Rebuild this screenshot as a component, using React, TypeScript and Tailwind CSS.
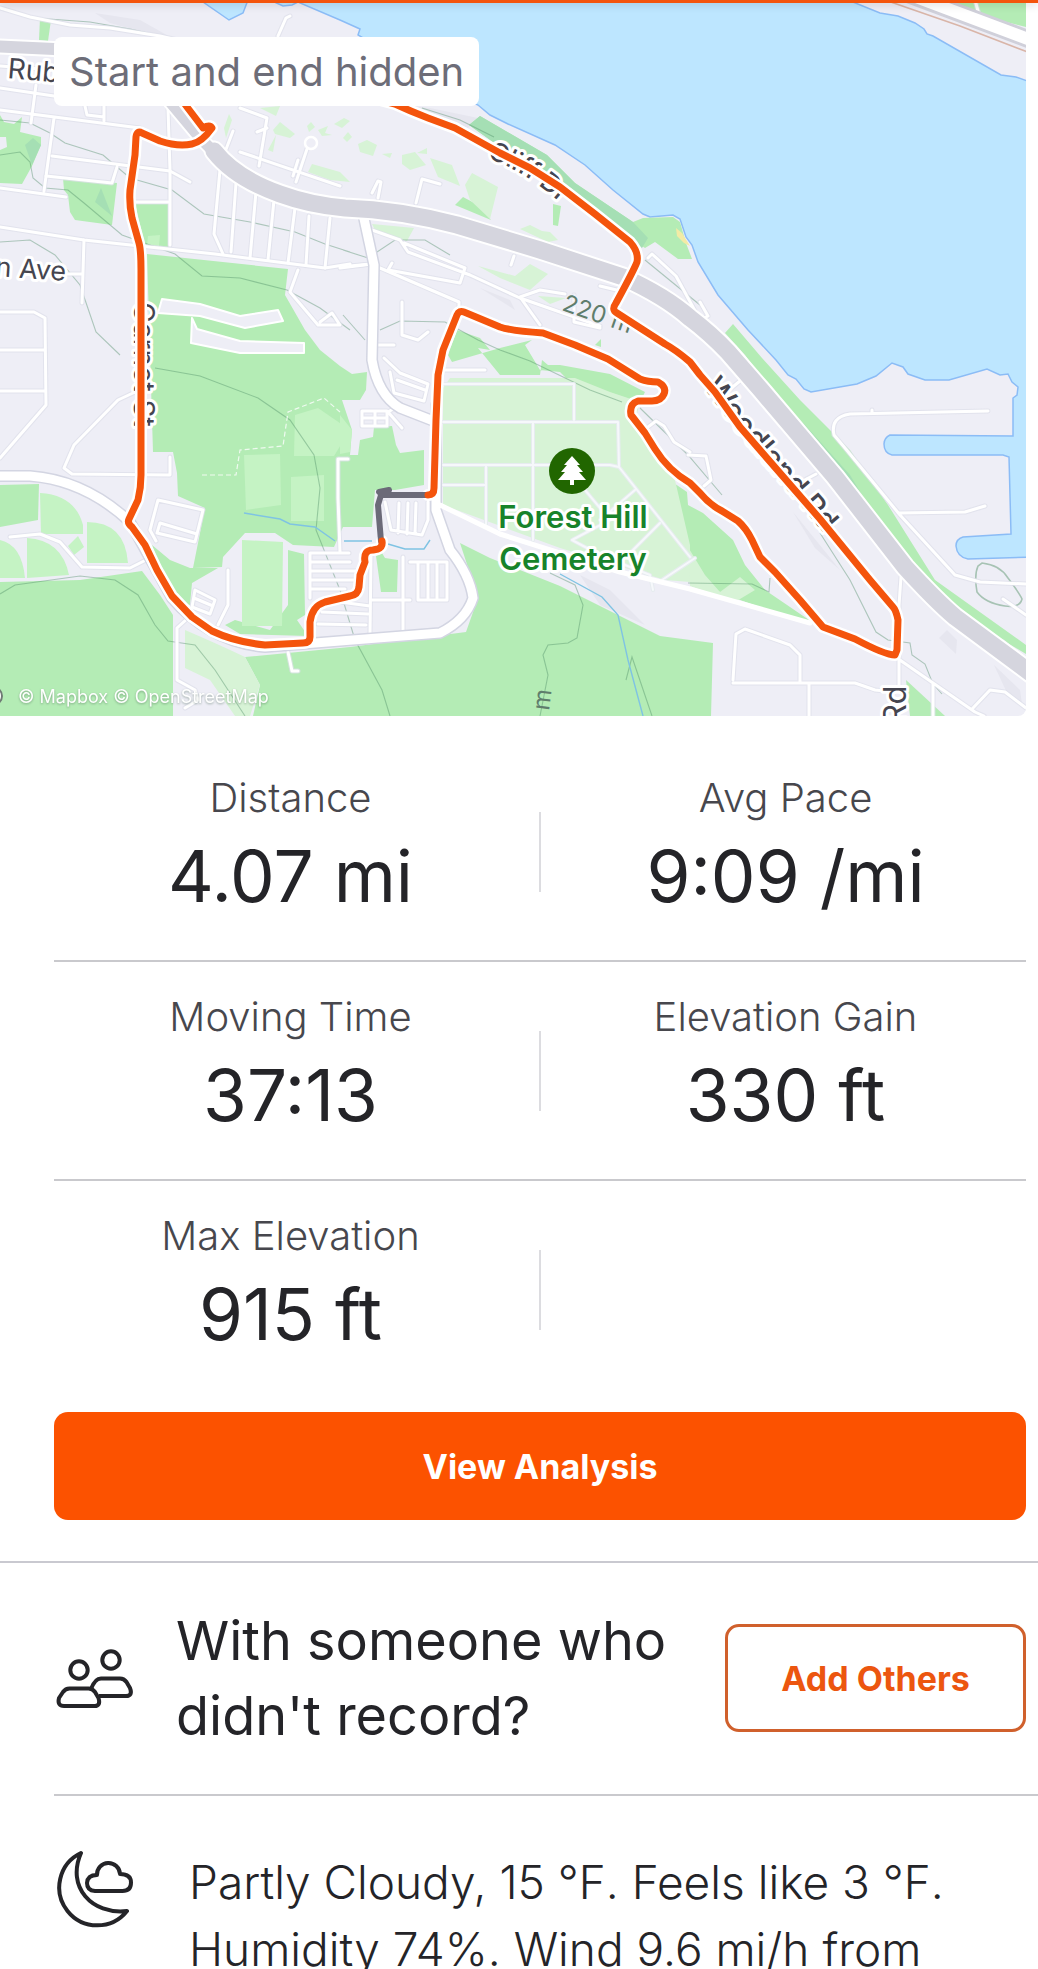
import React from "react";

const LAND = "#eeeef6";
const GREEN = "#b4ecb5";
const FIELD = "#c5f3c4";
const PALE = "#d7f3d6";

const water =
  "M200 0L229 20L243 13L248 0M270 0L283 6L292 5L298 2L340 20L360 29L358 35L420 72L478 105L490 115L508 124L555 145L585 165L613 190L643 214L650 217L673 215L680 219L686 237L692 245L698 262L718 295L748 330L776 360L788 375L796 379L804 389L811 392L857 384L876 376L892 363L903 367L908 374L925 380L949 380L987 369L1000 375L1008 374L1012 382L1018 387L1017 395L1013 398L1013 436L890 435Q884 438 884 444Q884 453 892 455L1003 455L1009 457L1011 534L963 537Q956 539 956 546Q957 557 968 559L1030 557L1030 82L1016 77L1001 75L933 36L927 34L924 29L915 23L898 16L880 13L848 0";

const greens = [
  "M40 18L51 20L48 41L39 40Z",
  "M0 115L4 122L14 124L22 117L20 132L41 137L41 145L32 166L22 184L0 183V150L7 147L6 137L0 137Z",
  "M63 178L117 183L112 225L75 220L70 212L68 195L64 190Z",
  "M135 204H168V247L145 245Z",
  "M147 254L288 269L285 295L305 330L320 350L340 366L352 374L367 372L366 390L360 400L342 400L352 430L350 455L358 455L360 440L373 437L374 427L392 426L396 445L400 453L424 450L424 485L395 490H375L372 527L343 527L334 547L293 545L275 533H245L223 557L222 567L193 568L205 508L178 496L177 473L173 452L153 452Z",
  "M0 485L39 484L38 520L0 527Z",
  "M0 582L80 580L142 571L160 595L173 615V716H0Z",
  "M152 545L170 560L190 568H218L192 583L190 605L180 603L165 580Z",
  "M245 657L350 647L466 632L478 598L460 543L490 558L560 586L660 636L713 643L711 716H253L260 685Z",
  "M376 556L382 553L385 558L398 560L397 592L381 592Z",
  "M288 550L304 554L305 615L297 620L308 636L240 634L225 625L235 620L270 630L288 605Z",
  "M457 330L480 338L490 350L478 348L500 375H540L542 360L548 365L560 365L610 374L645 392L640 402L615 396L570 382L560 372L540 370L525 345L532 340L500 348L452 362L448 355Z",
  "M640 487L662 475L687 492L688 505L703 513L733 540L745 565L765 590L790 607L812 622L768 610L740 600L715 590L700 575L688 560Z",
  "M455 205L463 197L480 206L491 220Z",
  "M553 204L561 206L558 226L553 225Z",
  "M595 345L601 339V347Z",
  "M906 680L945 716H910Z",
  "M955 3H1026V27L975 14Z",
];

const fields = [
  "M40 493Q75 495 83 525V534H41Z",
  "M87 522Q125 522 128 563H87Z",
  "M68 546L78 536L84 547L74 555Z",
  "M0 540Q22 545 25 578H0Z",
  "M27 538Q62 540 69 575L27 578Z",
  "M244 455L280 454L281 505L246 510Z",
  "M291 477L324 475V521H291Z",
  "M295 415L318 408L350 430L334 456H294Z",
  "M242 540L283 542L282 626H242Z",
  "M340 415L352 430L350 452L340 454Z",
  "M148 236L160 235L159 246L147 245Z",
];

const pale = [
  "M443 388L450 378L575 378L610 392L640 402L634 425L655 455L675 480L690 545V582L665 580L560 548L443 505Z",
  "M688 547L705 575L720 592L740 577L755 590L735 602L690 586Z",
  "M185 630Q220 645 245 657L260 685L250 716H235L210 680L185 668Z",
  "M260 108L280 106L276 116Z",
  "M273 130L280 122L295 134L290 138L275 134Z",
  "M268 150L276 135L273 152Z",
  "M224 128L229 114L232 120L226 138Z",
  "M307 126L311 122L315 127L309 132Z",
  "M318 130L328 126L325 133L332 135L322 136Z",
  "M334 124L344 118L350 121L342 128Z",
  "M343 138L348 132L352 137L347 142Z",
  "M358 144L367 140L377 145L373 156L360 152Z",
  "M312 164L340 172L350 182L330 180L308 172Z",
  "M382 154L392 153L390 158Z",
  "M402 155L415 152L426 165L410 170L402 164Z",
  "M417 153L427 148V154Z",
  "M430 158L452 165L460 186L438 177Z",
  "M472 173L498 187L490 219L470 200L465 185Z",
  "M372 224L414 228L407 241L376 232Z",
  "M478 266L515 276L530 264L548 274L530 290L500 278Z",
  "M538 296L566 298L550 304Z",
  "M520 229L530 225L542 231L550 232L558 240L548 242L535 236Z",
];

const minorRoads = [
  "M0 8L30 17L70 25L110 28L160 36L230 52",
  "M278 36L286 18L290 16",
  "M0 66L54 70M0 88L54 96M36 85L31 123M0 110L140 128M54 118L44 191M0 188L66 197",
  "M52 156L170 171L190 182M46 176L112 183L117 167",
  "M104 106V121M85 106L87 115L104 117",
  "M168 108L170 170V245M135 202H168",
  "M240 108L267 118L259 166M257 132L267 128",
  "M307 149L296 182M233 131L225 152",
  "M240 152L340 186M298 160L293 176",
  "M0 227L84 240L140 246L215 254L325 268L350 264",
  "M84 240L82 303M68 274H82",
  "M220 170L214 234L223 254M236 183L231 252M256 192L250 258M274 200L268 260M295 208L288 263M309 216L306 265M330 218L325 268",
  "M298 270L290 292L318 325H340L332 313L320 322M350 266L370 264",
  "M0 312H34L45 318L46 405L0 458M0 350H45M0 391H45",
  "M133 393L118 400L74 445L64 468L72 474L170 475V457",
  "M10 537L40 534L60 542L82 567L130 568L146 560",
  "M150 530L158 500L203 510L195 542L157 533L160 523L197 534M150 530L156 541",
  "M228 570L228 605L218 625M195 590L215 600L210 614L192 607ZM194 598L213 606",
  "M188 618L177 628V680L195 690L198 700L185 708M288 652L292 671H298",
  "M310 553H349M310 562H350M310 571H356M310 580H357M310 589H345M340 602L370 606M322 612L368 614M318 624L366 625M310 553V598M371 556L370 634",
  "M348 459L338 459V498L340 552",
  "M400 405L388 412L402 428M362 411H387V426H362ZM375 411V426M362 418H387",
  "M384 358L400 373L428 384L424 401L394 393L390 372M397 380L425 390",
  "M445 370H485",
  "M385 502L391 530L422 535L428 520V502M399 503L398 533M408 503L407 534M416 503L415 534",
  "M403 557V630M410 562H447V600H418V562M428 562V598M437 562V598M372 600H410",
  "M372 230L400 240L408 252L470 275L520 298L600 326M404 243L465 268L460 283L388 270L392 263",
  "M380 268L459 302V310M340 268L372 264M520 297L540 290L565 294M520 297L540 325",
  "M402 302V335L418 340L428 332M372 345H394M514 256L511 265",
  "M372 193L378 181L381 182L378 198M416 203L422 179L440 184",
  "M648 258L652 254L676 276L700 320L708 316L700 302M600 286L625 292M574 295V322L600 328",
  "M729 390L740 381M801 482L816 474M648 427L656 421L664 426L674 442L690 452M688 455L706 456L711 480L704 486",
  "M901 577L899 605V690M897 658L933 683L975 712L984 716M933 683V716M973 708L990 690L1005 692L1026 708",
  "M733 680L736 634L745 629L790 645L800 655V683M733 683H855L875 690L895 692M809 683V716",
  "M988 411L850 414Q830 417 834 435L845 448L900 515L955 575L980 582L1026 584M898 513L965 512L985 506M872 410V413",
  "M975 0L981 22M1003 599L1026 615M1003 642L1026 662",
];

const cemeteryPaths =
  "M443 384H574V420M443 422H618L619 467M533 422V540M443 465H610L619 467L690 557M443 485H486M486 465V524M585 490L610 520L572 540L600 555L650 575L653 590M660 523L630 553M600 520L635 490M662 580L695 558";

const contours =
  "M0 9L35 18L90 22L130 29L165 37M0 120L30 123L50 133L65 143L103 155L130 178L172 190L204 214L250 222L295 232L325 244L350 252M0 155L20 152L30 162L33 178L45 188L68 190L84 203L122 235L150 245L175 254L202 276L240 278L287 290L320 308L350 330M0 242L30 240L55 255L80 285L96 332L120 355M155 368L200 376L258 398L290 420L314 455L320 488L316 530L340 590L355 640L382 690L390 716M0 594L15 585L80 576L115 580L138 595L155 625L168 641L195 645L215 670L245 716M343 250L368 258L395 240L425 240L450 255M343 315L365 340M380 330L400 321L445 322L478 340L500 350L530 361L590 390L622 402M640 408L688 455L722 495M820 533L850 580L876 632L888 640L910 643L912 655L925 664L933 684L942 694M550 573L575 585L583 605L577 638L568 643L548 645L543 655L548 675L540 716M626 680L632 657L652 716M645 260L700 305M688 583L752 584L769 592L770 578M422 108L460 120L494 137";

const route =
  "M170 84L187 107L203 128Q210 124 212 128Q202 142 192 144Q178 147 160 141L142 133Q137 130 136 137L135 155L130 190Q129 205 132 218L139 243Q141 250 141 270V475Q141 488 138 500L129 519Q127 523 132 527L145 545L157 570L172 596L192 617L212 631Q235 642 265 645L303 643Q310 643 310 637V622Q312 606 325 602L350 596Q358 595 359 587L360 575L365 562Q363 550 373 550L378 549Q383 547 382 541M428 495Q434 495 434 488L436 420L438 375L443 350L457 315Q459 310 464 312L500 327Q512 331 543 333L575 345L608 359L640 379Q648 382 658 382Q667 387 664 394Q661 401 652 401L638 401Q629 404 631 415L645 433L655 449Q668 470 690 483L700 493Q710 505 722 511L738 521Q746 528 752 540L760 557L775 572L800 600L823 627L855 639Q885 655 895 655L897 650L898 620Q896 610 893 607L870 580L820 519L740 427L715 392L700 375L690 362Q676 350 665 344L617 313Q611 310 616 303Q634 270 637 262Q639 252 630 242L595 214L560 187L530 168L500 153L455 128L428 118Q410 111 395 104L350 92";

const motorway =
  "M214 151Q235 178 280 194Q310 205 345 208Q400 210 457 225L540 250L623 277Q665 296 690 318Q710 333 728 352L761 390L835 477L905 567Q935 600 955 617L1036 677";

const mainRoads =
  "M-10 476H30Q85 480 130 522L172 598Q210 642 265 647L440 633Q466 620 473 598Q470 575 450 550L436 510V405M363 214L374 265L372 360Q378 395 400 408L436 422";

const halo = { paintOrder: "stroke", stroke: "#ffffff", strokeLinejoin: "round" } as const;

function RouteMap() {
  return (
    <svg
      viewBox="0 0 1026 716"
      className="block w-full"
      role="img"
      aria-label="Route map"
      fontFamily="Inter, sans-serif"
    >
      <defs>
        <path id="cliff" d="M487 158Q530 172 578 219" />
        <path id="woodland" d="M703 387L737 431L836 547" />
      </defs>
      <rect width="1026" height="716" fill={LAND} />
      <g fill="#e6e6ef">
        <path d="M95 13L140 20L165 34L178 46L150 34L110 23Z" />
        <path d="M395 104L430 108L478 118L468 128Z" />
        <path d="M480 288L510 300L515 310Z" />
        <path d="M580 575L610 590L645 625L600 605Z" />
        <path d="M793 512L840 570L815 548Z" />
        <path d="M939 638L947 630L957 640L956 654Z" />
        <path d="M994 665L1020 690L1022 704L1008 695Z" />
      </g>
      <path d={water} fill="#bde6ff" stroke="#8bbcf6" strokeWidth="1.5" />
      <g fill={GREEN}>
        {greens.map((d) => (
          <path key={d} d={d} />
        ))}
        <path d="M469 125L480 116L547 155L575 183L633 222L643 218L673 217L680 222L686 243L692 259L678 259L655 242L645 248L605 220L560 187L530 168Z" />
        <path d="M725 333L733 324L762 358L800 400L850 450L888 505L935 580L1026 645V654L960 615L920 585L860 505L800 430L745 355Z" />
      </g>
      <g fill="#a5dfb4">
        <path d="M469 125L480 116L547 155L575 183L633 222L648 238L642 248L605 220L560 187L530 168Z" />
        <path d="M770 390L805 425L850 475L895 550L905 565L860 512L805 440Z" />
        <path d="M25 145L33 138L41 145L32 165Z" />
        <path d="M95 202L101 188L112 216Z" />
      </g>
      <path d="M676 228L682 233L690 246L684 243L677 236Z" fill="#f3eba5" />
      <g fill={FIELD}>
        {fields.map((d) => (
          <path key={d} d={d} />
        ))}
      </g>
      <g fill={PALE}>
        {pale.map((d) => (
          <path key={d} d={d} />
        ))}
      </g>
      <path d={contours} fill="none" stroke="#4b8a64" strokeOpacity="0.4" strokeWidth="1.1" />
      <path
        d="M244 513L280 519L290 524L315 527L335 541M344 541H372M388 544L405 549H424L430 540M560 574L602 597L618 615L628 660L643 716"
        fill="none"
        stroke="#7fc3e3"
        strokeWidth="1.4"
      />
      <path
        d="M982 563Q1000 565 1008 578Q1020 594 1022 599Q1020 608 1005 606Q985 603 977 592Q974 575 978 566Z"
        fill="none"
        stroke="#a7c3b4"
        strokeWidth="1.6"
      />
      <g fill="none" strokeLinejoin="round" strokeLinecap="round">
        <path d={cemeteryPaths} stroke="#e6ecef" strokeWidth="4" />
        <path d={cemeteryPaths} stroke="#f6f8fb" strokeWidth="2" />
      </g>
      <g fill={LAND} stroke="#ffffff" strokeWidth="2" strokeLinejoin="round">
        <path d="M162 299L200 304L240 316L278 310L283 321L245 328L200 316L158 313Z" />
        <path d="M192 318L191 343L240 353L304 353V343L240 341L197 329Z" />
      </g>
      <path
        d="M202 475H236L240 450L283 446L288 412L324 398L340 412"
        fill="none"
        stroke="#effaf0"
        strokeWidth="1.2"
        strokeDasharray="5 3"
      />
      <g fill="none" strokeLinejoin="round" strokeLinecap="round">
        {minorRoads.map((d) => (
          <path key={d} d={d} stroke="#dedfe9" strokeOpacity="0.75" strokeWidth="5" />
        ))}
        <circle cx="311" cy="143" r="6" stroke="#ffffff" strokeWidth="2.5" />
        {minorRoads.map((d) => (
          <path key={d} d={d} stroke="#ffffff" strokeWidth="3" />
        ))}
        <path d={mainRoads} stroke="#d3d5e2" strokeWidth="12" />
        <path d={mainRoads} stroke="#ffffff" strokeWidth="9" />
        <path d="M440 505L500 534L620 572L690 589L810 623" stroke="#ffffff" strokeWidth="5" />
        <path d="M170 102L200 138L216 154" stroke="#ffffff" strokeWidth="15" />
        <path d={motorway} stroke="#ffffff" strokeWidth="21" />
        <path d="M170 102L200 138L216 154" stroke="#d5d5de" strokeWidth="11" />
        <path d={motorway} stroke="#d5d5de" strokeWidth="17" />
        <path d="M-10 46L54 49L100 56" stroke="#ffffff" strokeWidth="16" />
        <path d="M-10 46L54 49L100 56" stroke="#d5d5de" strokeWidth="12" />
        <path d="M908 -6L1036 42" stroke="#d0d0da" strokeWidth="18" />
        <path d="M908 -6L1036 42" stroke="#ffffff" strokeWidth="12" />
        <path d="M885 0L960 26L1030 53" stroke="#d9b5a8" strokeWidth="1.6" />
      </g>

      <g fill="#45454f" strokeWidth="6" {...halo}>
        <text x="7" y="78" transform="rotate(5 7 78)" fontSize="28">
          Rub
        </text>
        <text x="-5" y="276" transform="rotate(4 -5 276)" fontSize="27">
          n Ave
        </text>
        <text transform="translate(134 302) rotate(90)" fontSize="28">
          Garnet St
        </text>
        <text fontSize="26" fontWeight="500">
          <textPath href="#cliff">Cliff Dr</textPath>
        </text>
        <text fontSize="30" fontWeight="500">
          <textPath href="#woodland">Woodland Rd</textPath>
        </text>
        <text transform="translate(906 724) rotate(-90)" fontSize="31">
          Rd
        </text>
      </g>
      <g fill="#5f7d6c" fontSize="24">
        <text transform="translate(561 310) rotate(19)" stroke={LAND} strokeWidth="3" paintOrder="stroke">
          220 m
        </text>
        <text transform="translate(549 711) rotate(-83)">m</text>
      </g>

      <g fill="none" strokeLinejoin="round" strokeLinecap="round">
        <path d={route} stroke="#ffffff" strokeWidth="12" />
        <path d="M381 541L378 505L381 495H428M379 492L389 490" stroke="#6b6a78" strokeWidth="6" />
        <path d={route} stroke="#f4540c" strokeWidth="7" />
      </g>

      <circle cx="572" cy="471" r="23" fill="#216600" />
      <path
        d="M572 456L580 465H577L583 472H579L586 480H574V485H570V480H558L565 472H561L567 465H564Z"
        fill="#ffffff"
      />
      <g fill="#17832a" fontSize="31" fontWeight="600" textAnchor="middle" strokeWidth="6" {...halo}>
        <text x="573" y="528">
          Forest Hill
        </text>
        <text x="573" y="570">
          Cemetery
        </text>
      </g>
      <text
        x="18"
        y="703"
        fontSize="18"
        fill="#ffffff"
        className="[filter:drop-shadow(0_1px_1px_rgba(60,90,70,0.45))]"
      >
        © Mapbox © OpenStreetMap
      </text>
      <circle cx="-7" cy="696" r="9" fill="#ffffff" stroke="#6f7a74" strokeWidth="2" />
    </svg>
  );
}

function PeopleIcon() {
  return (
    <svg
      viewBox="0 0 80 60"
      className="block w-20"
      fill="none"
      stroke="#242428"
      strokeWidth="4"
      strokeLinejoin="round"
      aria-hidden="true"
    >
      <circle cx="25" cy="22" r="8.7" />
      <circle cx="57" cy="12" r="8.7" />
      <path d="M15.500 40.500H34.500Q38.500 40.500 41 44L44.500 50Q47 58 40.500 58H10Q3 58 5 50L9 44Q11.500 40.500 15.500 40.500Z" />
      <path d="M37 41Q41 30.500 47 30.500H66Q70 30.500 72.500 34L76 40Q79 48 72 48H45" />
    </svg>
  );
}

function NightCloudIcon() {
  return (
    <svg
      viewBox="0 0 80 80"
      className="block w-20"
      fill="none"
      stroke="#242428"
      strokeWidth="4"
      strokeLinejoin="round"
      aria-hidden="true"
    >
      <path d="M27 4A38 38 0 1 0 73 62C38 66 12 38 27 4Z" />
      <path d="M43 26A11.500 11.500 0 0 1 66 25Q77 25 77 33.500Q77 42 68.500 42H41Q33 41.500 33 34Q33.500 26 43 26Z" />
    </svg>
  );
}

const stats: { label: string; value: string }[][] = [
  [
    { label: "Distance", value: "4.07 mi" },
    { label: "Avg Pace", value: "9:09 /mi" },
  ],
  [
    { label: "Moving Time", value: "37:13" },
    { label: "Elevation Gain", value: "330 ft" },
  ],
  [{ label: "Max Elevation", value: "915 ft" }],
];

function Stat({ label, value }: { label: string; value: string }) {
  return (
    <div className="flex flex-col items-center pt-[31px] pb-[43px]">
      <dt className="text-[40px] leading-[48px] font-[350] text-[#47474d]">{label}</dt>
      <dd className="mt-[13px] text-[71px] leading-[82px] text-[#242428]">{value}</dd>
    </div>
  );
}

export default function App() {
  return (
    <main className="h-screen overflow-hidden bg-white font-['Inter',sans-serif] text-[#242428]">
      <section className="relative pr-3">
        <div className="overflow-hidden rounded-br-lg">
          <RouteMap />
        </div>
        <div className="absolute inset-x-0 top-0 h-[3px] bg-[#f4540c] shadow-[0_1px_8px_rgba(0,0,0,0.25)]" />
        <p className="absolute top-[37px] left-[54px] rounded-lg bg-white px-[15px] py-2 text-[40px] leading-[53px] text-[#6d6d78]">
          Start and end hidden
        </p>
      </section>

      <dl className="mr-3 ml-[54px] pt-[27px]">
        {stats.map((row, i) => (
          <div
            key={row[0].label}
            className={`grid grid-cols-[1fr_2px_1fr] items-center ${i < stats.length - 1 ? "border-b-2 border-[#c9c9cd]" : ""}`}
          >
            <div className="pr-3">
              <Stat {...row[0]} />
            </div>
            <div className="h-20 bg-[#dcdce0]" />
            <div className="pl-1">{row[1] && <Stat {...row[1]} />}</div>
          </div>
        ))}
      </dl>

      <div className="mr-3 ml-[54px] pt-[14px] pb-[41px]">
        <button className="block h-[108px] w-full rounded-[14px] bg-[#fc5200] text-[34px] font-bold text-white">
          View Analysis
        </button>
      </div>

      <section className="flex items-center border-t-2 border-[#c9c9d0] pt-[40px] pr-3 pb-[41px] pl-[54px]">
        <PeopleIcon />
        <h2 className="ml-[42px] flex-1 text-[54px] leading-[75px]">
          With someone who
          <br />
          didn&apos;t record?
        </h2>
        <button className="h-[108px] w-[301px] shrink-0 rounded-[14px] border-[3px] border-[#d0602c] text-[34px] font-bold text-[#ec560f]">
          Add Others
        </button>
      </section>

      <section className="ml-[54px] flex items-start border-t-2 border-[#c9c9cd] pt-[53px]">
        <NightCloudIcon />
        <p className="ml-[55px] text-[46px] leading-[67px] font-[350] whitespace-nowrap">
          Partly Cloudy, 15 ℉. Feels like 3 ℉.
          <br />
          Humidity 74%. Wind 9.6 mi/h from
        </p>
      </section>
    </main>
  );
}
